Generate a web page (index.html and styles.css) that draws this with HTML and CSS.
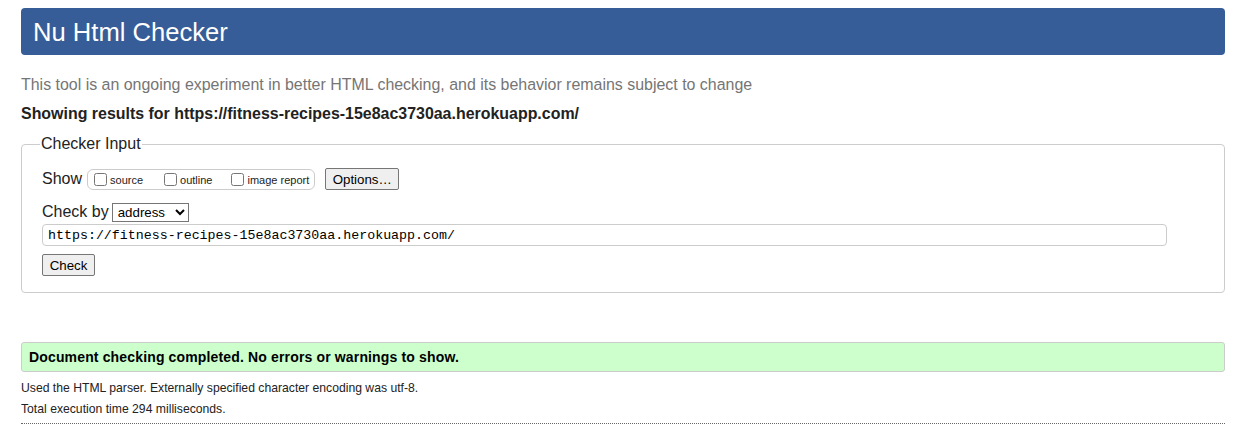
FILE: index.html
```html
<!DOCTYPE html>
<html lang="en">
<head>
<meta charset="utf-8">
<title>Nu Html Checker</title>
<link rel="stylesheet" href="styles.css">
</head>
<body>
<h1 class="title">Nu Html Checker</h1>
<p class="intro">This tool is an ongoing experiment in better HTML checking, and its behavior remains subject to change</p>
<p class="showing">Showing results for https://fitness-recipes-15e8ac3730aa.herokuapp.com/</p>
<fieldset class="checker">
  <legend class="legend">Checker Input</legend>
  <div class="show-row">
    <span class="lbl">Show</span>
    <span class="opts">
      <label class="opt"><input type="checkbox" class="cb">source</label>
      <label class="opt"><input type="checkbox" class="cb">outline</label>
      <label class="opt"><input type="checkbox" class="cb">image report</label>
    </span>
    <button class="btn options">Options…</button>
  </div>
  <div class="checkby-row">
    <span class="lbl">Check by</span>
    <select class="sel"><option>address</option></select>
  </div>
  <input class="url" type="text" value="https://fitness-recipes-15e8ac3730aa.herokuapp.com/">
  <div><button class="btn check">Check</button></div>
</fieldset>
<div class="success">Document checking completed. No errors or warnings to show.</div>
<div class="meta-block">
  <p class="meta">Used the HTML parser. Externally specified character encoding was utf-8.</p>
  <p class="meta">Total execution time 294 milliseconds.</p>
</div>
<hr class="dots">
</body>
</html>
```
FILE: styles.css
```css
html, body { background: #fff; }
body {
  margin: 8px 17px 0 21px;
  font-family: "Liberation Sans", Arial, sans-serif;
  color: #222;
}
.title {
  margin: 0;
  height: 47px;
  box-sizing: border-box;
  background: #365d98;
  color: #fff;
  font-weight: normal;
  font-size: 25.6px;
  line-height: 48px;
  padding: 0 12px;
  border-radius: 4px;
}
.intro {
  margin: 20px 0 0;
  font-size: 15.94px;
  line-height: 20px;
  color: #757575;
}
.showing {
  margin: 9px 0 0;
  font-size: 15.94px;
  line-height: 20px;
  font-weight: bold;
}
.checker {
  margin: 11px 0 0;
  border: 1px solid #ccc;
  border-radius: 4px;
  padding: 10px 57px 16px 20px;
  min-width: 0;
}
.legend {
  font-size: 16px;
  padding: 0 1px;
  margin-left: -2px;
  color: #222;
}
.show-row {
  display: flex;
  align-items: center;
  height: 24px;
  margin-top: 4px;
}
.lbl {
  font-size: 16px;
  margin-right: 5px;
  white-space: nowrap;
}
.opts {
  display: inline-flex;
  align-items: center;
  flex-shrink: 0;
  box-sizing: border-box;
  border: 1px solid #ccc;
  border-radius: 6px;
  height: 21px;
  padding: 0 5px 0 6px;
  white-space: nowrap;
}
.opt {
  display: inline-flex;
  align-items: center;
  font-size: 11px;
  padding-top: 2px;
  white-space: nowrap;
}
.opt:nth-child(1) { margin-right: 21px; }
.opt:nth-child(2) { margin-right: 19px; }
.cb {
  margin: -2px 3px 0 0;
  width: 13px;
  height: 13px;
}
.btn {
  font-family: "Liberation Sans", Arial, sans-serif;
  font-size: 13.3px;
  color: #000;
  background: #efefef;
  border: 1px solid #767676;
  border-radius: 2px;
  height: 22px;
  padding: 0;
  flex-shrink: 0;
}
.options { margin-left: 10px; width: 74px; }
.checkby-row {
  display: flex;
  align-items: center;
  margin-top: 11px;
  height: 20px;
}
.checkby-row .lbl { margin-right: 3px; }
.sel {
  font-family: "Liberation Sans", Arial, sans-serif;
  font-size: 13.3px;
  width: 77px;
  height: 19px;
  border: 1px solid #767676;
  border-radius: 0;
  padding: 0 0 0 1px;
  background: #fff;
  color: #000;
}
.url {
  display: block;
  box-sizing: border-box;
  width: 100%;
  height: 22px;
  margin-top: 2px;
  border: 1px solid #ccc;
  border-radius: 4px;
  padding: 0 5px;
  font-family: "Liberation Mono", "Courier New", monospace;
  font-size: 13.3px;
  color: #000;
}
.check { margin-top: 8px; width: 53px; }
.success {
  margin-top: 49px;
  background: #ccffcc;
  border: 1px solid #ccc;
  border-radius: 3px;
  height: 30px;
  box-sizing: border-box;
  padding: 0 7px;
  line-height: 29px;
  font-size: 14px;
  font-weight: bold;
  color: #000;
  letter-spacing: 0.15px;
}
.meta-block { margin-top: 6px; }
.meta {
  margin: 0;
  font-size: 12.2px;
  line-height: 21px;
  color: #222;
}
.dots {
  margin: 3px 0 0;
  border: 0;
  border-top: 1px dotted #666;
  height: 0;
}
```
